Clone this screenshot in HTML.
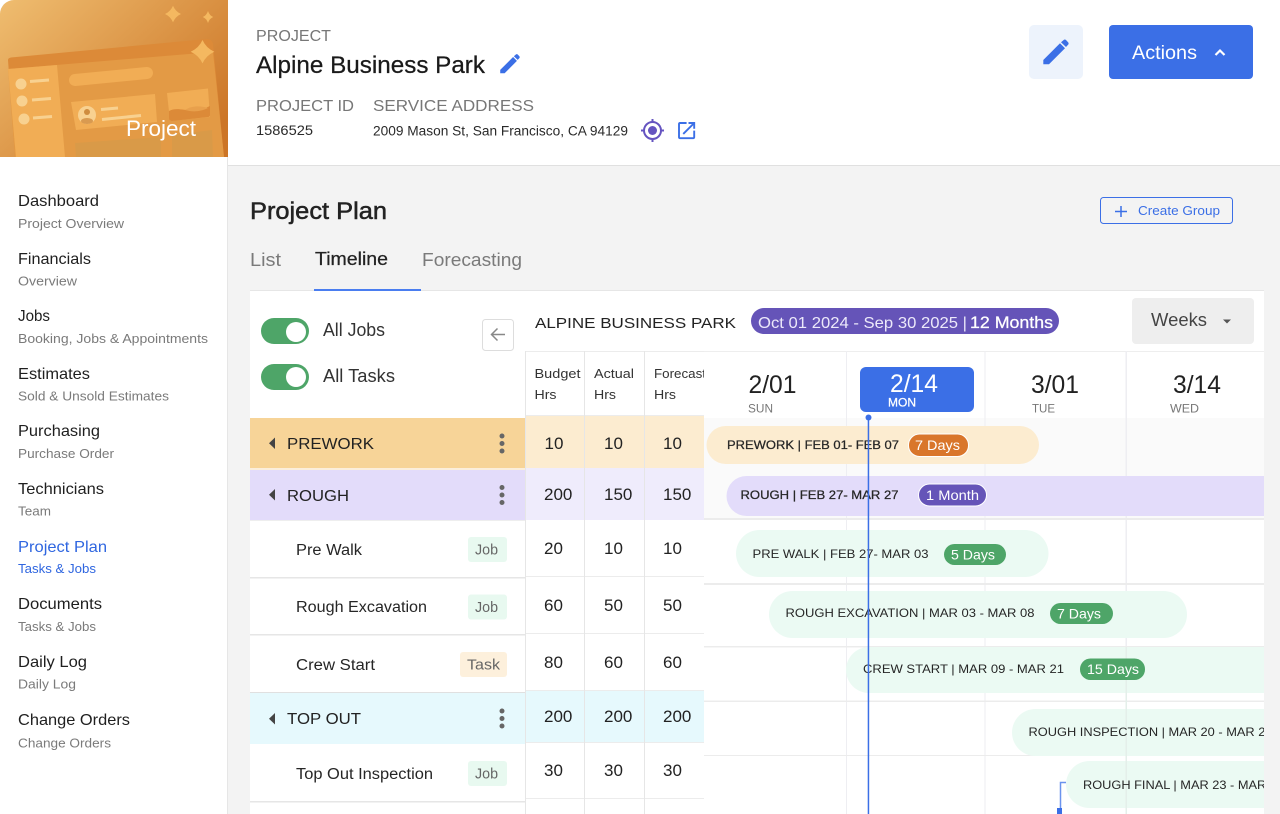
<!DOCTYPE html>
<html lang="en"><head><meta charset="utf-8"><title>Project Plan</title>
<style>
html,body{margin:0;padding:0;background:#f3f3f3;width:1280px;height:814px;overflow:hidden}
svg{display:block;font-family:"Liberation Sans",sans-serif}
.m{stroke:currentColor;stroke-width:.25}
.nav{font-size:16px;fill:#1f1f1f;color:#1f1f1f}
.sub{font-size:13px;fill:#7a7a7a}
.lab{font-size:16px;fill:#777}
.num{font-size:17px;fill:#222}
.grp{font-size:16px;fill:#222}
.row{font-size:15.5px;fill:#262626}
.tag{font-size:15px;fill:#666}
.hd{font-size:13px;fill:#333}
.bar{font-size:12px;fill:#262626}
.bd{font-size:14px;fill:#fff}
.d{font-size:25px;fill:#222}
.w{font-size:12px;fill:#777}
</style></head><body>
<svg width="1280" height="814" viewBox="0 0 1280 814" xmlns="http://www.w3.org/2000/svg">
<defs>
<linearGradient id="g" x1="0" y1="0" x2="1" y2=".75"><stop offset="0" stop-color="#efbd70"/><stop offset="1" stop-color="#cc7526"/></linearGradient>
<clipPath id="ban"><path d="M14 0H228V157H0V14A14 14 0 0 1 14 0Z"/></clipPath>
<clipPath id="tl"><rect x="704" y="351" width="560" height="463"/></clipPath>
<clipPath id="fc"><rect x="645" y="351" width="59" height="60"/></clipPath>
</defs>
<rect width="1280" height="814" fill="#f3f3f3"/>
<rect x="0" y="0" width="227" height="814" fill="#fff"/>
<rect x="227" y="0" width="1" height="814" fill="#e6e6e6"/>
<rect x="228" y="0" width="1052" height="165" fill="#fff"/>
<rect x="228" y="165" width="1052" height="1" fill="#e0e0e0"/>

<!-- banner -->
<g clip-path="url(#ban)">
<rect width="228" height="157" fill="url(#g)"/>
<path d="M8 60Q8 58 11 57.500L207 39Q212 39 213 44L224 157H15Z" fill="#dc8a38"/>
<path d="M8 69L213 52L224 157H15Z" fill="#e39a45"/>
<path d="M8 69L57 65L65 157H16Z" fill="#f1ad55"/>
<g fill="#f8d190"><circle cx="21" cy="84" r="5.500"/><circle cx="22" cy="101" r="5.500"/><circle cx="24" cy="119" r="5.500"/></g>
<path d="M30 81.500L49 80M32 100L51 98.500M33 118L52 116.500" stroke="#f8d190" stroke-width="3" fill="none"/>
<path d="M75 80L147 73" stroke="#f1ad55" stroke-width="12" stroke-linecap="round"/>
<path d="M71 102L155 94L157 122L76 130Z" fill="#f1ad55"/>
<circle cx="87" cy="115" r="9" fill="#f8d190"/><circle cx="87" cy="112" r="3" fill="#cf8c3e"/><ellipse cx="87" cy="121" rx="6" ry="3" fill="#d99a50"/>
<path d="M101 109.500L118 108M102 119.500L141 115.500" stroke="#f8d190" stroke-width="3"/>
<path d="M167 93L208 88.500L210 117L170 121Z" fill="#f1ad55"/>
<path d="M169 111C180 105 190 116 210 106L210 115Q210 117 208 117L172 121Q169 121 169 118Z" fill="#dc8a38"/>
<path d="M185 110C192 105 202 106 208 108C200 112 192 112 185 110Z" fill="#e8a04c"/>
<path d="M75 143L161 137V157H76Z" fill="#d99a48"/><path d="M172 135L212 130L213 157H172Z" fill="#d99a48"/>
<g fill="#f4b860">
<path d="M173 5.700Q175.500 11.500 181 14Q175.500 16.500 173 22.300Q170.500 16.500 165 14Q170.500 11.500 173 5.700Z"/>
<path d="M208 11Q209.500 15.500 213.200 17Q209.500 18.500 208 23Q206.500 18.500 202.800 17Q206.500 15.500 208 11Z"/>
<path d="M202.500 40Q206 48 214.300 51.700Q206 55.500 202.500 63.400Q199 55.500 190.700 51.700Q199 48 202.500 40Z"/>
</g>
<text x="126" y="136" font-size="22" fill="#fff" textLength="70" lengthAdjust="spacingAndGlyphs">Project</text>
</g>

<!-- sidebar -->
<text class="nav" x="18" y="206" textLength="81" lengthAdjust="spacingAndGlyphs">Dashboard</text><text class="sub" x="18" y="228" textLength="106" lengthAdjust="spacingAndGlyphs">Project Overview</text>
<text class="nav" x="18" y="264" textLength="73" lengthAdjust="spacingAndGlyphs">Financials</text><text class="sub" x="18" y="285.500" textLength="59" lengthAdjust="spacingAndGlyphs">Overview</text>
<text class="nav" x="18" y="321" textLength="32" lengthAdjust="spacingAndGlyphs">Jobs</text><text class="sub" x="18" y="343" textLength="190" lengthAdjust="spacingAndGlyphs">Booking, Jobs &amp; Appointments</text>
<text class="nav" x="18" y="379" textLength="72" lengthAdjust="spacingAndGlyphs">Estimates</text><text class="sub" x="18" y="400.500" textLength="151" lengthAdjust="spacingAndGlyphs">Sold &amp; Unsold Estimates</text>
<text class="nav" x="18" y="436" textLength="82" lengthAdjust="spacingAndGlyphs">Purchasing</text><text class="sub" x="18" y="458" textLength="96" lengthAdjust="spacingAndGlyphs">Purchase Order</text>
<text class="nav" x="18" y="494" textLength="86" lengthAdjust="spacingAndGlyphs">Technicians</text><text class="sub" x="18" y="515.500" textLength="33" lengthAdjust="spacingAndGlyphs">Team</text>
<text class="nav" x="18" y="552" textLength="89" lengthAdjust="spacingAndGlyphs" style="fill:#2f66e0">Project Plan</text><text class="sub" x="18" y="573" textLength="78" lengthAdjust="spacingAndGlyphs" style="fill:#2f66e0">Tasks &amp; Jobs</text>
<text class="nav" x="18" y="609" textLength="84" lengthAdjust="spacingAndGlyphs">Documents</text><text class="sub" x="18" y="631" textLength="78" lengthAdjust="spacingAndGlyphs">Tasks &amp; Jobs</text>
<text class="nav" x="18" y="667" textLength="69" lengthAdjust="spacingAndGlyphs">Daily Log</text><text class="sub" x="18" y="688.500" textLength="58" lengthAdjust="spacingAndGlyphs">Daily Log</text>
<text class="nav" x="18" y="725" textLength="112" lengthAdjust="spacingAndGlyphs">Change Orders</text><text class="sub" x="18" y="747.500" textLength="93" lengthAdjust="spacingAndGlyphs">Change Orders</text>

<!-- header -->
<text class="lab" x="256" y="41" textLength="75" lengthAdjust="spacingAndGlyphs">PROJECT</text>
<text class="m" x="256" y="73" font-size="24" fill="#1a1a1a" color="#1a1a1a" textLength="229" lengthAdjust="spacingAndGlyphs">Alpine Business Park</text>
<g transform="translate(500 54.500) scale(.77)" fill="#3b6fe6"><path d="M.3 20L17 3.300L22 8.300L6 24.300H.3Z"/><path d="M18 2.300L21-.3Q22-.8 23 0L25.300 2.500Q26 3.500 25.300 4.500L23 7Z"/></g>
<text class="lab" x="256" y="111" textLength="98" lengthAdjust="spacingAndGlyphs">PROJECT ID</text>
<text class="lab" x="373" y="111" textLength="161" lengthAdjust="spacingAndGlyphs">SERVICE ADDRESS</text>
<text x="256" y="135" font-size="13.500" fill="#2a2a2a" textLength="57" lengthAdjust="spacingAndGlyphs">1586525</text>
<text x="373" y="135.500" font-size="13.500" fill="#2a2a2a" textLength="255" lengthAdjust="spacingAndGlyphs">2009 Mason St, San Francisco, CA 94129</text>
<g fill="none" stroke="#6554c0" stroke-width="2"><circle cx="652.500" cy="130.500" r="8.500"/><path d="M652.500 119V123M652.500 138V142M641 130.500H645M660 130.500H664"/></g>
<circle cx="652.500" cy="130.500" r="4.500" fill="#6554c0"/>
<path transform="translate(675.200 119.200) scale(.95)" fill="#3b6fe6" d="M19 19H5V5h7V3H5c-1.110 0-2 .9-2 2v14c0 1.100.89 2 2 2h14c1.100 0 2-.9 2-2v-7h-2v7zM14 3v2h3.590l-9.830 9.830 1.410 1.410L19 6.410V10h2V3h-7z"/>
<rect x="1029" y="25" width="54" height="54" rx="5" fill="#edf3fc"/>
<g transform="translate(1043 40)" fill="#3b6fe6"><path d="M.3 20L17 3.300L22 8.300L6 24.300H.3Z"/><path d="M18 2.300L21-.3Q22-.8 23 0L25.300 2.500Q26 3.500 25.300 4.500L23 7Z"/></g>
<rect x="1109" y="25" width="144" height="54" rx="4" fill="#3b6fe6"/>
<text x="1132" y="59" font-size="19" fill="#fff" textLength="65" lengthAdjust="spacingAndGlyphs">Actions</text>
<path d="M1215.500 55L1220 50.500L1224.500 55" fill="none" stroke="#fff" stroke-width="2.200"/>

<!-- section header -->
<text class="m" x="250" y="219" font-size="24" fill="#222" color="#222" style="stroke-width:.5" textLength="137" lengthAdjust="spacingAndGlyphs">Project Plan</text>
<rect x="1100.500" y="197.500" width="132" height="26" rx="3" fill="none" stroke="#3b6fe6"/>
<path d="M1121 206V217M1115 211.500H1127" stroke="#3b6fe6" stroke-width="1.500"/>
<text x="1138" y="215" font-size="13" fill="#3b6fe6" textLength="82" lengthAdjust="spacingAndGlyphs">Create Group</text>
<text x="250" y="266" font-size="18" fill="#7a7a7a" textLength="31" lengthAdjust="spacingAndGlyphs">List</text>
<text class="m" x="315" y="265" font-size="18" fill="#222" color="#222" textLength="73" lengthAdjust="spacingAndGlyphs">Timeline</text>
<text x="422" y="266" font-size="18" fill="#7a7a7a" textLength="100" lengthAdjust="spacingAndGlyphs">Forecasting</text>

<!-- card -->
<rect x="250" y="290" width="1014" height="524" fill="#fff"/>
<rect x="250" y="290" width="1014" height="1" fill="#e6e6e6"/>
<rect x="314" y="289" width="107" height="2" fill="#4a7df0"/>

<!-- toggles -->
<rect x="261" y="318" width="48" height="26" rx="13" fill="#4ea568"/><circle cx="296" cy="332" r="10" fill="#fff"/>
<rect x="261" y="364" width="48" height="26" rx="13" fill="#4ea568"/><circle cx="296" cy="377" r="10" fill="#fff"/>
<text x="323" y="336" font-size="18" fill="#333" textLength="62" lengthAdjust="spacingAndGlyphs">All Jobs</text>
<text x="323" y="382" font-size="18" fill="#333" textLength="72" lengthAdjust="spacingAndGlyphs">All Tasks</text>
<rect x="482.500" y="319.500" width="31" height="31" rx="3" fill="#fff" stroke="#ddd"/>
<path d="M505 334.500H492M497.500 328.500L491.500 334.500L497.500 340.500" fill="none" stroke="#888" stroke-width="1.500"/>

<!-- title row -->
<text x="535" y="328" font-size="15" fill="#222" textLength="201" lengthAdjust="spacingAndGlyphs">ALPINE BUSINESS PARK</text>
<rect x="751" y="308" width="308" height="26" rx="13" fill="#6554b8"/>
<text x="758" y="328" font-size="16" fill="#ece9fa" textLength="209" lengthAdjust="spacingAndGlyphs">Oct 01 2024 - Sep 30 2025 |</text>
<text class="m" x="970" y="328" font-size="16.500" fill="#fff" color="#fff" textLength="83" lengthAdjust="spacingAndGlyphs">12 Months</text>
<rect x="1132" y="298" width="122" height="46" rx="4" fill="#eeeeee"/>
<text x="1151" y="326" font-size="18" fill="#444" textLength="56" lengthAdjust="spacingAndGlyphs">Weeks</text>
<path d="M1223 319.500H1231L1227 323.500Z" fill="#555"/>

<!-- left rows -->
<rect x="250" y="418" width="275" height="50" fill="#f7d498"/>
<rect x="250" y="468" width="275" height="2" fill="#fbeedb"/>
<rect x="250" y="470" width="275" height="50" fill="#e3dcfa"/>
<rect x="250" y="520" width="275" height="1" fill="#eee"/>
<rect x="250" y="577" width="275" height="1.500" fill="#e6e6e6"/>
<rect x="250" y="634" width="275" height="1.500" fill="#e6e6e6"/>
<rect x="250" y="692" width="275" height="1" fill="#e0e0e0"/>
<rect x="250" y="693" width="275" height="51" fill="#e6f9fd"/>
<rect x="250" y="801" width="275" height="1.500" fill="#e6e6e6"/>
<!-- group labels -->
<g fill="#444"><path d="M275 437.500V449L269 443.200Z"/><path d="M275 489V500.500L269 494.800Z"/><path d="M275 713V724.500L269 718.800Z"/></g>
<text class="grp" x="287" y="449" textLength="87" lengthAdjust="spacingAndGlyphs">PREWORK</text>
<text class="grp" x="287" y="501" textLength="62" lengthAdjust="spacingAndGlyphs">ROUGH</text>
<text class="grp" x="287" y="724" textLength="74" lengthAdjust="spacingAndGlyphs">TOP OUT</text>
<g fill="#666"><circle cx="502" cy="436" r="2.500"/><circle cx="502" cy="443.500" r="2.500"/><circle cx="502" cy="451" r="2.500"/>
<circle cx="502" cy="487.500" r="2.500"/><circle cx="502" cy="495" r="2.500"/><circle cx="502" cy="502.500" r="2.500"/>
<circle cx="502" cy="711" r="2.500"/><circle cx="502" cy="718.500" r="2.500"/><circle cx="502" cy="726" r="2.500"/></g>
<text class="row" x="296" y="555" textLength="66" lengthAdjust="spacingAndGlyphs">Pre Walk</text>
<text class="row" x="296" y="612" textLength="131" lengthAdjust="spacingAndGlyphs">Rough Excavation</text>
<text class="row" x="296" y="670" textLength="79" lengthAdjust="spacingAndGlyphs">Crew Start</text>
<text class="row" x="296" y="779" textLength="137" lengthAdjust="spacingAndGlyphs">Top Out Inspection</text>
<rect x="468" y="537" width="39" height="25" rx="3" fill="#e8f9f0"/><text class="tag" x="475" y="554.500" textLength="23" lengthAdjust="spacingAndGlyphs">Job</text>
<rect x="468" y="594.500" width="39" height="25" rx="3" fill="#e8f9f0"/><text class="tag" x="475" y="612" textLength="23" lengthAdjust="spacingAndGlyphs">Job</text>
<rect x="460" y="652" width="47" height="25" rx="3" fill="#fdf0dc"/><text class="tag" x="467" y="669.500" textLength="33" lengthAdjust="spacingAndGlyphs">Task</text>
<rect x="468" y="761" width="39" height="25" rx="3" fill="#e8f9f0"/><text class="tag" x="475" y="778.500" textLength="23" lengthAdjust="spacingAndGlyphs">Job</text>

<!-- number columns -->
<rect x="526" y="415" width="178" height="53" fill="#fcecd0"/>
<rect x="526" y="468" width="178" height="52" fill="#efecfc"/>
<rect x="526" y="691" width="178" height="52" fill="#e6f9fd"/>
<g fill="#ececec">
<rect x="526" y="351" width="178" height="1"/>
<rect x="526" y="415" width="178" height="1"/>
<rect x="526" y="576" width="178" height="1"/>
<rect x="526" y="633" width="178" height="1"/>
<rect x="526" y="690" width="178" height="1"/>
<rect x="526" y="742" width="178" height="1"/>
<rect x="526" y="798" width="178" height="1"/>
</g>
<g fill="#e6e6e6"><rect x="525" y="351" width="1" height="463"/><rect x="584" y="351" width="1" height="463"/><rect x="644" y="351" width="1" height="463"/></g>
<text class="hd" x="534.500" y="378" textLength="46" lengthAdjust="spacingAndGlyphs">Budget</text><text class="hd" x="534.500" y="399" textLength="22" lengthAdjust="spacingAndGlyphs">Hrs</text>
<text class="hd" x="594" y="378" textLength="40" lengthAdjust="spacingAndGlyphs">Actual</text><text class="hd" x="594" y="399" textLength="22" lengthAdjust="spacingAndGlyphs">Hrs</text>
<g clip-path="url(#fc)"><text class="hd" x="654" y="378" textLength="52" lengthAdjust="spacingAndGlyphs">Forecast</text></g><text class="hd" x="654" y="399" textLength="22" lengthAdjust="spacingAndGlyphs">Hrs</text>
<text class="num" x="544.500" y="449">10</text><text class="num" x="604" y="449">10</text><text class="num" x="663" y="449">10</text>
<text class="num" x="544" y="500">200</text><text class="num" x="604" y="500">150</text><text class="num" x="663" y="500">150</text>
<text class="num" x="544" y="554">20</text><text class="num" x="604" y="554">10</text><text class="num" x="663" y="554">10</text>
<text class="num" x="544" y="611">60</text><text class="num" x="604" y="611">50</text><text class="num" x="663" y="611">50</text>
<text class="num" x="544" y="668">80</text><text class="num" x="604" y="668">60</text><text class="num" x="663" y="668">60</text>
<text class="num" x="544" y="722">200</text><text class="num" x="604" y="722">200</text><text class="num" x="663" y="722">200</text>
<text class="num" x="544" y="776">30</text><text class="num" x="604" y="776">30</text><text class="num" x="663" y="776">30</text>

<!-- timeline -->
<g clip-path="url(#tl)">
<rect x="704" y="351" width="560" height="1" fill="#eee"/>
<rect x="704" y="418" width="560" height="100" fill="#fafafa"/>
<g fill="#eeeef2"><rect x="846" y="351" width="1" height="463"/><rect x="984.500" y="351" width="1" height="463"/><rect x="1125.500" y="351" width="1.500" height="463"/></g>
<g fill="#ececec"><rect x="704" y="518" width="560" height="2"/><rect x="704" y="583" width="560" height="2"/><rect x="704" y="646" width="560" height="1.500"/><rect x="704" y="700.500" width="560" height="1.500"/><rect x="704" y="755" width="560" height="1"/></g>

<rect x="706.500" y="426" width="332.500" height="38" rx="19" fill="#fcecd0"/>
<rect x="726.500" y="476" width="600" height="40" rx="20" fill="#e3dcfa"/>
<rect x="736" y="530" width="312.500" height="47" rx="23.500" fill="#ebfaf3"/>
<rect x="769" y="591" width="418" height="47" rx="23.500" fill="#ebfaf3"/>
<rect x="846" y="647" width="560" height="46" rx="23" fill="#ebfaf3"/>
<rect x="1012" y="709" width="400" height="47" rx="23.500" fill="#ebfaf3"/>
<rect x="1066" y="761" width="400" height="47" rx="23.500" fill="#ebfaf3"/>
<rect x="1125.500" y="647" width="1.500" height="167" fill="#e4efea"/>

<path d="M1066 782.500H1060.500V808" fill="none" stroke="#6b93ee" stroke-width="1.500"/>
<rect x="1057" y="808" width="5" height="6" fill="#3b6fe6"/>

<text class="bar m" color="#262626" x="727" y="449" textLength="172" lengthAdjust="spacingAndGlyphs">PREWORK | FEB 01- FEB 07</text>
<rect x="908.500" y="434" width="60" height="22.500" rx="11" fill="#d9762b" stroke="#fff"/>
<text class="bd" x="915" y="450" textLength="45" lengthAdjust="spacingAndGlyphs">7 Days</text>

<text class="bar m" color="#262626" x="740.500" y="499" textLength="158" lengthAdjust="spacingAndGlyphs">ROUGH | FEB 27- MAR 27</text>
<rect x="918.500" y="484" width="68" height="22" rx="11" fill="#6554b8" stroke="#fff"/>
<text class="bd" x="926" y="500" textLength="53" lengthAdjust="spacingAndGlyphs">1 Month</text>

<text class="bar" x="752.500" y="558" textLength="176" lengthAdjust="spacingAndGlyphs">PRE WALK | FEB 27- MAR 03</text>
<rect x="944" y="544" width="62" height="21" rx="10.500" fill="#4ea568"/>
<text class="bd" x="951" y="559.500" textLength="44" lengthAdjust="spacingAndGlyphs">5 Days</text>

<text class="bar" x="785.500" y="617" textLength="249" lengthAdjust="spacingAndGlyphs">ROUGH EXCAVATION | MAR 03 - MAR 08</text>
<rect x="1050" y="603" width="63" height="21" rx="10.500" fill="#4ea568"/>
<text class="bd" x="1057" y="618.500" textLength="44" lengthAdjust="spacingAndGlyphs">7 Days</text>

<text class="bar" x="863" y="673" textLength="201" lengthAdjust="spacingAndGlyphs">CREW START | MAR 09 - MAR 21</text>
<rect x="1080" y="658.500" width="65" height="21.500" rx="10.500" fill="#4ea568"/>
<text class="bd" x="1087" y="674" textLength="52" lengthAdjust="spacingAndGlyphs">15 Days</text>

<text class="bar" x="1028.500" y="736" textLength="244" lengthAdjust="spacingAndGlyphs">ROUGH INSPECTION | MAR 20 - MAR 22</text>
<text class="bar" x="1083" y="789" textLength="201" lengthAdjust="spacingAndGlyphs">ROUGH FINAL | MAR 23 - MAR 25</text>

<!-- date heads -->
<text class="d" x="748.500" y="393" textLength="48" lengthAdjust="spacingAndGlyphs">2/01</text><text class="w" x="748" y="412.500" textLength="25" lengthAdjust="spacingAndGlyphs">SUN</text>
<rect x="860" y="367" width="114" height="45" rx="6" fill="#3b6fe6"/>
<text class="d" x="890" y="392" textLength="48" lengthAdjust="spacingAndGlyphs" style="fill:#fff">2/14</text><text class="w m" color="#fff" x="888" y="406.500" textLength="28" lengthAdjust="spacingAndGlyphs" style="fill:#fff">MON</text>
<text class="d" x="1031" y="393" textLength="48" lengthAdjust="spacingAndGlyphs">3/01</text><text class="w" x="1032" y="412.500" textLength="23" lengthAdjust="spacingAndGlyphs">TUE</text>
<text class="d" x="1173" y="393" textLength="48" lengthAdjust="spacingAndGlyphs">3/14</text><text class="w" x="1170" y="412.500" textLength="29" lengthAdjust="spacingAndGlyphs">WED</text>

<rect x="867.700" y="417" width="1.500" height="397" fill="#3b6fe6"/>
<circle cx="868.500" cy="417.500" r="3" fill="#3b6fe6"/>
</g>
</svg>
</body></html>
